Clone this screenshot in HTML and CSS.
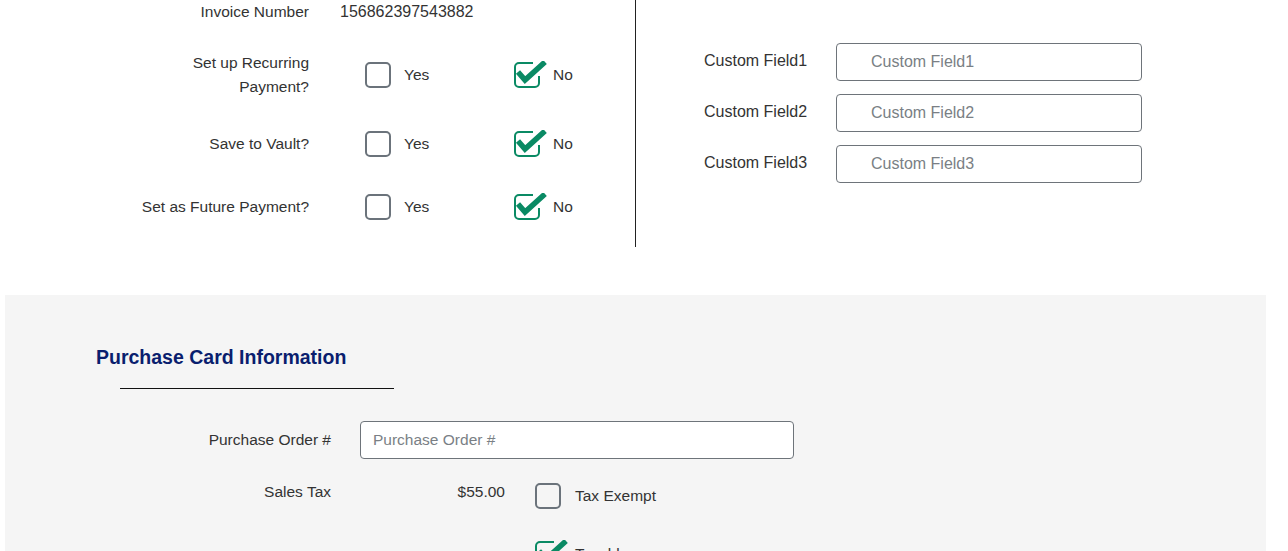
FILE: index.html
```html
<!DOCTYPE html>
<html>
<head>
<meta charset="utf-8">
<link rel="stylesheet" href="styles.css">
</head>
<body>
<div class="top">
  <div class="left">
    <div class="row row-plain">
      <div class="label">Invoice Number</div>
      <div class="value">156862397543882</div>
    </div>
    <div class="row">
      <div class="label">Set up Recurring<br>Payment?</div>
      <div class="options">
        <div class="option"><svg class="cb" viewBox="0 0 34 28" width="34" height="28"><rect x="1" y="2" width="24" height="24" rx="4" fill="none" stroke="#6b737b" stroke-width="2"/></svg><span>Yes</span></div>
        <div class="option"><svg class="cb" viewBox="0 0 34 28" width="34" height="28"><path d="M19 2H5A4 4 0 0 0 1 6V22A4 4 0 0 0 5 26H21A4 4 0 0 0 25 22V15" fill="none" stroke="#0a8a64" stroke-width="2"/><polyline points="4,11 11,19 31,1" fill="none" stroke="#0a8a64" stroke-width="5.5"/></svg><span>No</span></div>
      </div>
    </div>
    <div class="row">
      <div class="label">Save to Vault?</div>
      <div class="options">
        <div class="option"><svg class="cb" viewBox="0 0 34 28" width="34" height="28"><rect x="1" y="2" width="24" height="24" rx="4" fill="none" stroke="#6b737b" stroke-width="2"/></svg><span>Yes</span></div>
        <div class="option"><svg class="cb" viewBox="0 0 34 28" width="34" height="28"><path d="M19 2H5A4 4 0 0 0 1 6V22A4 4 0 0 0 5 26H21A4 4 0 0 0 25 22V15" fill="none" stroke="#0a8a64" stroke-width="2"/><polyline points="4,11 11,19 31,1" fill="none" stroke="#0a8a64" stroke-width="5.5"/></svg><span>No</span></div>
      </div>
    </div>
    <div class="row">
      <div class="label">Set as Future Payment?</div>
      <div class="options">
        <div class="option"><svg class="cb" viewBox="0 0 34 28" width="34" height="28"><rect x="1" y="2" width="24" height="24" rx="4" fill="none" stroke="#6b737b" stroke-width="2"/></svg><span>Yes</span></div>
        <div class="option"><svg class="cb" viewBox="0 0 34 28" width="34" height="28"><path d="M19 2H5A4 4 0 0 0 1 6V22A4 4 0 0 0 5 26H21A4 4 0 0 0 25 22V15" fill="none" stroke="#0a8a64" stroke-width="2"/><polyline points="4,11 11,19 31,1" fill="none" stroke="#0a8a64" stroke-width="5.5"/></svg><span>No</span></div>
      </div>
    </div>
  </div>
  <div class="right">
    <div class="field">
      <div class="flabel">Custom Field1</div>
      <div class="input input-wide">Custom Field1</div>
    </div>
    <div class="field">
      <div class="flabel">Custom Field2</div>
      <div class="input input-wide">Custom Field2</div>
    </div>
    <div class="field">
      <div class="flabel">Custom Field3</div>
      <div class="input input-wide">Custom Field3</div>
    </div>
  </div>
</div>

<div class="card">
  <h2 class="card-title">Purchase Card Information</h2>
  <div class="title-rule"></div>
  <div class="prow prow-center">
    <div class="plabel">Purchase Order #</div>
    <div class="input input-po">Purchase Order #</div>
  </div>
  <div class="prow">
    <div class="plabel">Sales Tax</div>
    <div class="amount">$55.00</div>
    <div class="checklist">
      <div class="option option-auto"><svg class="cb" viewBox="0 0 34 28" width="34" height="28"><rect x="1" y="2" width="24" height="24" rx="4" fill="none" stroke="#6b737b" stroke-width="2"/></svg><span>Tax Exempt</span></div>
      <div class="option option-auto"><svg class="cb" viewBox="0 0 34 28" width="34" height="28"><path d="M19 2H5A4 4 0 0 0 1 6V22A4 4 0 0 0 5 26H21A4 4 0 0 0 25 22V15" fill="none" stroke="#0a8a64" stroke-width="2"/><polyline points="4,11 11,19 31,1" fill="none" stroke="#0a8a64" stroke-width="5.5"/></svg><span>Taxable</span></div>
    </div>
  </div>
</div>
</body>
</html>
```

FILE: styles.css
```css
html, body {
  margin: 0;
  padding: 0;
  background: #ffffff;
  overflow: hidden;
}
body {
  font-family: "Liberation Sans", Arial, sans-serif;
  font-size: 15.5px;
  line-height: 24px;
  color: #333333;
}

.top {
  display: flex;
  height: 247px;
}
.left {
  box-sizing: border-box;
  width: 636px;
  border-right: 1px solid #222222;
  display: flex;
  flex-direction: column;
  gap: 27px;
}
.row {
  display: flex;
  align-items: center;
  min-height: 36px;
}
.row-plain {
  min-height: 0;
}
.label {
  width: 309px;
  text-align: right;
  flex: none;
}
.value {
  margin-left: 31px;
  font-size: 16px;
}
.options {
  display: flex;
  margin-left: 56px;
}
.option {
  display: flex;
  align-items: center;
  width: 149px;
}
.option-auto {
  width: auto;
}
.cb {
  display: block;
  flex: none;
  width: 34px;
  height: 28px;
  margin-right: 5px;
}

.right {
  padding-top: 43px;
  padding-left: 68px;
  display: flex;
  flex-direction: column;
  gap: 13px;
  font-size: 16px;
}
.field {
  display: flex;
  align-items: center;
}
.flabel {
  width: 132px;
  flex: none;
  padding-bottom: 2px;
}
.input {
  box-sizing: border-box;
  height: 38px;
  border: 1px solid #6e747a;
  border-radius: 4px;
  background: #ffffff;
  color: #7a7f85;
  display: flex;
  align-items: center;
}
.input-wide {
  width: 306px;
  padding-left: 34px;
  padding-bottom: 1px;
}

.card {
  margin: 48px 22px 0 5px;
  background: #f5f5f5;
  padding: 50px 0 60px 91px;
}
.card-title {
  margin: 0;
  font-size: 19.5px;
  line-height: 24px;
  font-weight: bold;
  color: #0a1e6e;
}
.title-rule {
  width: 274px;
  margin: 19px 0 32px 24px;
  border-top: 1px solid #111111;
}
.prow {
  display: flex;
  margin-left: -91px;
  margin-bottom: 21px;
}
.prow-center {
  align-items: center;
}
.plabel {
  width: 326px;
  text-align: right;
  flex: none;
}
.input-po {
  width: 434px;
  margin-left: 29px;
  padding-left: 12px;
}
.amount {
  width: 145px;
  margin-left: 29px;
  text-align: right;
}
.checklist {
  margin-left: 30px;
  margin-top: 2px;
  display: flex;
  flex-direction: column;
  gap: 30px;
}
.checklist .cb {
  margin-right: 6px;
}
```
